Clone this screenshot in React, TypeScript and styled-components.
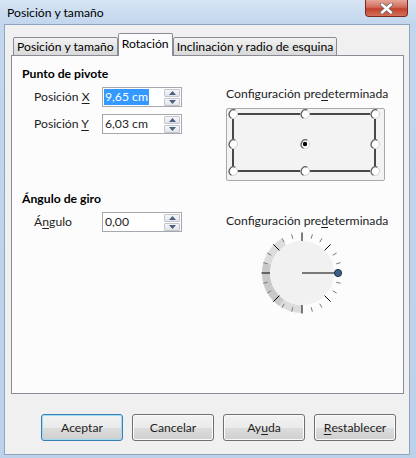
import styled, { createGlobalStyle } from 'styled-components';

const GlobalStyle = createGlobalStyle`
  html, body {
    margin: 0;
    padding: 0;
  }
  body {
    font-family: Lato, 'Noto Sans', sans-serif;
    font-size: 12.2px;
    color: #1e1e1e;
  }
`;

const Window = styled.div`
  width: 416px;
  height: 458px;
  box-sizing: border-box;
  padding: 0 6px 3px 4px;
  display: flex;
  flex-direction: column;
  background: linear-gradient(180deg, #d6e4f4 0%, #c2d6ed 24px, #bcd1ea 100%);
`;

const TitleBar = styled.div`
  height: 24px;
  display: flex;
  justify-content: space-between;
  align-items: flex-start;
  margin-right: 2px;
`;

const Title = styled.span`
  padding: 5px 0 0 3px;
  line-height: 16px;
  color: #000;
`;

const CloseButton = styled.div`
  width: 43px;
  height: 17px;
  box-sizing: border-box;
  border: 1px solid #7a2a22;
  border-top: none;
  border-radius: 0 0 4px 4px;
  background: linear-gradient(180deg, #e5a698 0%, #d36c5c 45%, #c2412f 55%, #d4705a 100%);
  display: flex;
  align-items: center;
  justify-content: center;
`;

const Client = styled.div`
  flex: 1;
  display: flex;
  flex-direction: column;
  background: #f0f0f0;
  border: 1px solid #8fa4be;
  padding: 8px 5px 0 6px;
`;

const TabBar = styled.div`
  display: flex;
  align-items: flex-end;
  height: 23px;
  padding-left: 2px;
  margin-bottom: -1px;
  position: relative;
  z-index: 1;
`;

const Tab = styled.div<{ $active?: boolean }>`
  box-sizing: border-box;
  height: ${(p) => (p.$active ? '23px' : '19px')};
  padding: ${(p) => (p.$active ? '1px 3px 0' : '0 3px')};
  border: 1px solid #898c95;
  border-bottom: ${(p) => (p.$active ? 'none' : '1px solid #898c95')};
  border-radius: 2px 2px 0 0;
  background: ${(p) =>
    p.$active ? '#fcfcfc' : 'linear-gradient(180deg, #f2f2f2 0%, #e6e6e6 50%, #d9d9d9 100%)'};
  line-height: 17px;
  color: #000;
  white-space: nowrap;
  & + & {
    border-left: ${(p) => (p.$active ? '1px solid #898c95' : 'none')};
  }
`;

const Panel = styled.div`
  flex: 1;
  background: #fcfcfc;
  border: 1px solid #898c95;
  padding: 10px 0 0 10px;
`;

const Section = styled.div<{ $top?: number }>`
  display: grid;
  grid-template-columns: 204px 1fr;
  margin-top: ${(p) => p.$top ?? 0}px;
`;

const Column = styled.div<{ $pad?: number }>`
  display: flex;
  flex-direction: column;
  padding-top: ${(p) => p.$pad ?? 0}px;
`;

const Heading = styled.div`
  font-weight: bold;
  line-height: 16px;
  color: #000;
`;

const Fields = styled.div`
  display: grid;
  grid-template-columns: 80px 80px;
  row-gap: 7px;
  margin-top: 5px;
`;

const FieldLabel = styled.div`
  padding-left: 12px;
  line-height: 20px;
  white-space: nowrap;
`;

const U = styled.span`
  text-decoration: underline;
  text-underline-offset: 2px;
`;

const Field = styled.div`
  height: 20px;
  box-sizing: border-box;
  border: 1px solid #a5a8ae;
  background: #fff;
  display: flex;
  align-items: center;
  justify-content: space-between;
  padding: 0 1px 0 1px;
`;

const FieldText = styled.span<{ $selected?: boolean }>`
  line-height: 16px;
  padding: 0 1px;
  color: ${(p) => (p.$selected ? '#fff' : '#1e1e1e')};
  background: ${(p) => (p.$selected ? '#3399ff' : 'transparent')};
`;

const Spin = styled.div`
  display: flex;
  flex-direction: column;
  gap: 1px;
`;

const SpinButton = styled.div`
  width: 16px;
  height: 8px;
  box-sizing: border-box;
  border: 1px solid #c3c6cc;
  border-radius: 1px;
  background: linear-gradient(180deg, #f6f6f6, #e2e4e8);
  display: flex;
  align-items: center;
  justify-content: center;
`;

const PresetLabel = styled.div`
  line-height: 16px;
  white-space: nowrap;
`;

const PivotBox = styled.div`
  width: 159px;
  height: 73px;
  box-sizing: border-box;
  margin-top: 6px;
  border: 1px solid #a9a9a9;
  border-radius: 2px;
  background: #f3f3f3;
  display: flex;
`;

const Dial = styled.svg`
  margin: -1px 0 0 31px;
  display: block;
`;

const ButtonRow = styled.div`
  display: flex;
  justify-content: flex-end;
  gap: 9px;
  padding: 20px 8px 13px 0;
`;

const Button = styled.div<{ $default?: boolean }>`
  width: 82px;
  height: 27px;
  box-sizing: border-box;
  border: 1px solid ${(p) => (p.$default ? '#3c7fb1' : '#707070')};
  border-radius: 3px;
  background: linear-gradient(180deg, #f3f3f3 0%, #ebebeb 50%, #dddddd 51%, #cfcfcf 100%);
  box-shadow: inset 0 0 0 1px ${(p) => (p.$default ? '#9edcf6' : '#fbfbfb')};
  display: flex;
  align-items: center;
  justify-content: center;
  color: #1e1e1e;
`;

function Arrow({ up }: { up?: boolean }) {
  return (
    <svg width="7" height="4" viewBox="0 0 7 4">
      <polygon points={up ? '3.5,0 7,4 0,4' : '0,0 7,0 3.5,4'} fill="#4a5f82" />
    </svg>
  );
}

function SpinField({ value, selected }: { value: string; selected?: boolean }) {
  return (
    <Field>
      <FieldText $selected={selected}>{value}</FieldText>
      <Spin>
        <SpinButton>
          <Arrow up />
        </SpinButton>
        <SpinButton>
          <Arrow />
        </SpinButton>
      </Spin>
    </Field>
  );
}

function Radio({ x, y, checked }: { x: number; y: number; checked?: boolean }) {
  const r = 4.5;
  const a1 = (60 * Math.PI) / 180;
  const a2 = (250 * Math.PI) / 180;
  const p1 = `${x + r * Math.cos(a1)},${y - r * Math.sin(a1)}`;
  const p2 = `${x + r * Math.cos(a2)},${y - r * Math.sin(a2)}`;
  return (
    <g>
      <circle cx={x} cy={y} r={r} fill="#fff" stroke="#d2d2d2" strokeWidth="1" />
      <path d={`M${p1} A${r},${r} 0 0 0 ${p2}`} fill="none" stroke="#5c5c5c" strokeWidth="1.2" />
      {checked && <circle cx={x} cy={y} r="2.2" fill="#000" />}
    </g>
  );
}

function PivotPicker() {
  const xs = [6, 78, 148];
  const ys = [5, 35, 62];
  return (
    <PivotBox>
      <svg width="157" height="71" viewBox="0 0 157 71">
        <rect x="6" y="5" width="142" height="57" fill="none" stroke="#000" strokeWidth="1.4" />
        {ys.map((y) =>
          xs.map((x) => <Radio key={`${x}-${y}`} x={x} y={y} checked={x === 78 && y === 35} />)
        )}
      </svg>
    </PivotBox>
  );
}

function sector(cx: number, cy: number, r1: number, r2: number, from: number, to: number) {
  const pt = (r: number, a: number) => {
    const t = (a * Math.PI) / 180;
    return `${cx + r * Math.cos(t)},${cy - r * Math.sin(t)}`;
  };
  const large = to - from > 180 ? 1 : 0;
  return `M${pt(r2, from)} A${r2},${r2} 0 ${large} 0 ${pt(r2, to)} L${pt(r1, to)} A${r1},${r1} 0 ${large} 1 ${pt(r1, from)} Z`;
}

function AngleDial() {
  const c = 45;
  const ticks = [];
  for (let i = 1; i < 24; i++) {
    const a = (i * 15 * Math.PI) / 180;
    const major = i % 3 === 0;
    const r1 = major ? 32 : 35.5;
    const r2 = major ? 40.5 : 40;
    ticks.push(
      <line
        key={i}
        x1={c + r1 * Math.cos(a)}
        y1={c - r1 * Math.sin(a)}
        x2={c + r2 * Math.cos(a)}
        y2={c - r2 * Math.sin(a)}
        stroke={major ? '#000' : '#7a7a7a'}
        strokeWidth="1"
      />
    );
  }
  return (
    <Dial width="90" height="90" viewBox="0 0 90 90">
      <path d={sector(c, c, 32, 40, 120, 270)} fill="#dcdcdc" />
      <path d={sector(c, c, 32, 40, 165, 235)} fill="#c9c9c9" />
      <circle cx={c} cy={c} r="32" fill="#f1f1f1" />
      {ticks}
      <line x1={c} y1={c} x2={c + 36} y2={c} stroke="#000" strokeWidth="1" />
      <circle cx={c + 36} cy={c} r="3.6" fill="#3e5f86" stroke="#1f3550" strokeWidth="1" />
    </Dial>
  );
}

export default function App() {
  return (
    <>
      <GlobalStyle />
      <Window>
        <TitleBar>
          <Title>Posición y tamaño</Title>
          <CloseButton>
            <svg width="13" height="11" viewBox="0 0 13 11">
              <path
                d="M2,1.5 L11,9.5 M11,1.5 L2,9.5"
                stroke="#6b6b6b"
                strokeWidth="4"
                strokeLinecap="round"
              />
              <path
                d="M2,1.5 L11,9.5 M11,1.5 L2,9.5"
                stroke="#fff"
                strokeWidth="2.4"
                strokeLinecap="round"
              />
            </svg>
          </CloseButton>
        </TitleBar>
        <Client>
          <TabBar>
            <Tab>Posición y tamaño</Tab>
            <Tab $active>Rotación</Tab>
            <Tab>Inclinación y radio de esquina</Tab>
          </TabBar>
          <Panel>
            <Section>
              <Column>
                <Heading>Punto de pivote</Heading>
                <Fields>
                  <FieldLabel>
                    Posición <U>X</U>
                  </FieldLabel>
                  <SpinField value="9,65 cm" selected />
                  <FieldLabel>
                    Posición <U>Y</U>
                  </FieldLabel>
                  <SpinField value="6,03 cm" />
                </Fields>
              </Column>
              <Column $pad={20}>
                <PresetLabel>
                  Configuración pre<U>d</U>eterminada
                </PresetLabel>
                <PivotPicker />
              </Column>
            </Section>
            <Section $top={10}>
              <Column>
                <Heading>Ángulo de giro</Heading>
                <Fields>
                  <FieldLabel>
                    Á<U>n</U>gulo
                  </FieldLabel>
                  <SpinField value="0,00" />
                </Fields>
              </Column>
              <Column $pad={22}>
                <PresetLabel>
                  Configuración pre<U>d</U>eterminada
                </PresetLabel>
                <AngleDial />
              </Column>
            </Section>
          </Panel>
          <ButtonRow>
            <Button $default>Aceptar</Button>
            <Button>Cancelar</Button>
            <Button>
              Ay<U>u</U>da
            </Button>
            <Button>
              <U>R</U>establecer
            </Button>
          </ButtonRow>
        </Client>
      </Window>
    </>
  );
}
